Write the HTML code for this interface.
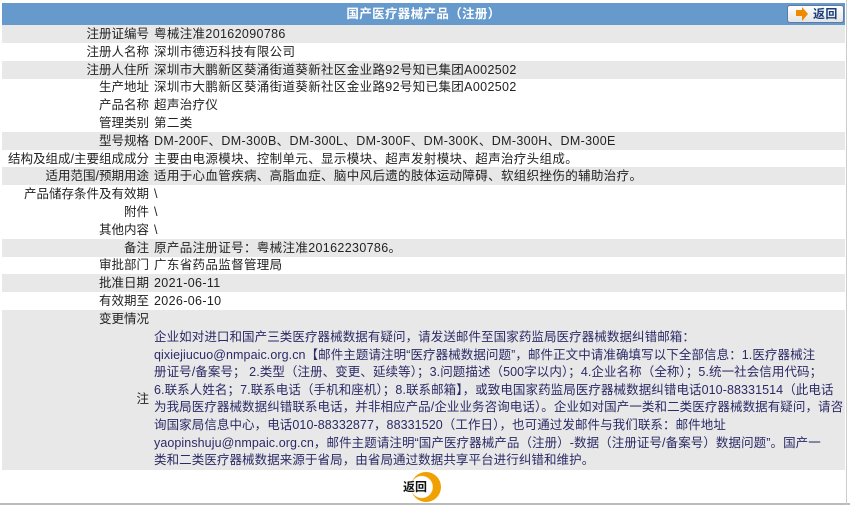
<!DOCTYPE html>
<html><head><meta charset="utf-8"><style>
body{margin:0;width:850px;height:505px;background:#fff;position:relative;overflow:hidden;font-family:"Liberation Sans","Noto Sans CJK SC",sans-serif;font-size:12.5px;color:#222;letter-spacing:0.35px}
.hd{position:absolute;left:2px;top:3px;width:843px;height:22px;background:#6699cc;color:#fff;font-weight:bold;text-align:center;line-height:22px;font-size:12.5px}
.btn{position:absolute;left:787px;top:5px;width:55px;height:16px;background:linear-gradient(#fff,#e4e4e4);border:1px solid #5a7aa8;border-radius:3px;font-size:12px;font-weight:bold;color:#1a3f7a;line-height:16px}
.btn i{position:absolute;left:8px;top:4px;width:6px;height:6px;background:#f08a00}
.btn b{position:absolute;left:14px;top:1px;width:0;height:0;border-left:6px solid #f08a00;border-top:7px solid transparent;border-bottom:7px solid transparent}
.btn span{position:absolute;left:25px;top:0}
.r{position:absolute;left:2px;width:843px;height:18px;line-height:18px;white-space:nowrap}
.g{background:#e8e8e8}
.l{position:absolute;right:696px;text-align:right;letter-spacing:0}
.v{position:absolute;left:152px}
.note{position:absolute;left:154px;top:329px;line-height:17.6px;color:#2a2a66;white-space:nowrap;letter-spacing:0.08px}
.back{position:absolute;left:403px;top:478px;font-weight:bold;font-size:12px;color:#111;letter-spacing:0}
.ring{position:absolute;left:411px;top:472px;width:30px;height:30px;border-radius:50%;background:radial-gradient(circle at 36% 50%,#fff 0 10.5px,#f0a000 11.5px)}
.bl{position:absolute;left:0;top:503px;width:850px;height:2px;background:#bbb}
.br{position:absolute;left:846px;top:0;width:1px;height:505px;background:#ccc}
</style></head><body>
<div class="hd">国产医疗器械产品（注册）</div>
<div class="btn"><i></i><b></b><span>返回</span></div>

<div class="r g" style="top:25px"><span class="l">注册证编号</span><span class="v">粤械注准20162090786</span></div>
<div class="r" style="top:42.8px"><span class="l">注册人名称</span><span class="v">深圳市德迈科技有限公司</span></div>
<div class="r g" style="top:60.6px"><span class="l">注册人住所</span><span class="v">深圳市大鹏新区葵涌街道葵新社区金业路92号知已集团A002502</span></div>
<div class="r" style="top:78.4px"><span class="l">生产地址</span><span class="v">深圳市大鹏新区葵涌街道葵新社区金业路92号知已集团A002502</span></div>
<div class="r" style="top:96.2px"><span class="l">产品名称</span><span class="v">超声治疗仪</span></div>
<div class="r" style="top:114px"><span class="l">管理类别</span><span class="v">第二类</span></div>
<div class="r g" style="top:131.8px"><span class="l">型号规格</span><span class="v">DM-200F、DM-300B、DM-300L、DM-300F、DM-300K、DM-300H、DM-300E</span></div>
<div class="r" style="top:149.6px"><span class="l">结构及组成/主要组成成分</span><span class="v">主要由电源模块、控制单元、显示模块、超声发射模块、超声治疗头组成。</span></div>
<div class="r g" style="top:167.4px"><span class="l">适用范围/预期用途</span><span class="v">适用于心血管疾病、高脂血症、脑中风后遗的肢体运动障碍、软组织挫伤的辅助治疗。</span></div>
<div class="r" style="top:185.2px"><span class="l">产品储存条件及有效期</span><span class="v">\</span></div>
<div class="r" style="top:203px"><span class="l">附件</span><span class="v">\</span></div>
<div class="r" style="top:220.8px"><span class="l">其他内容</span><span class="v">\</span></div>
<div class="r g" style="top:238.6px"><span class="l">备注</span><span class="v">原产品注册证号：粤械注准20162230786。</span></div>
<div class="r" style="top:256.4px"><span class="l">审批部门</span><span class="v">广东省药品监督管理局</span></div>
<div class="r g" style="top:274.2px"><span class="l">批准日期</span><span class="v">2021-06-11</span></div>
<div class="r" style="top:292px"><span class="l">有效期至</span><span class="v">2026-06-10</span></div>
<div class="r g" style="top:309.8px;height:160px"><span class="l">变更情况</span><span class="l" style="top:80px">注</span></div>
<div class="note">企业如对进口和国产三类医疗器械数据有疑问，请发送邮件至国家药监局医疗器械数据纠错邮箱：<br>qixiejiucuo@nmpaic.org.cn【邮件主题请注明“医疗器械数据问题”，邮件正文中请准确填写以下全部信息：1.医疗器械注<br>册证号/备案号； 2.类型（注册、变更、延续等）；3.问题描述（500字以内）；4.企业名称（全称）；5.统一社会信用代码；<br>6.联系人姓名；7.联系电话（手机和座机）；8.联系邮箱】，或致电国家药监局医疗器械数据纠错电话010-88331514（此电话<br>为我局医疗器械数据纠错联系电话，并非相应产品/企业业务咨询电话）。企业如对国产一类和二类医疗器械数据有疑问，请咨<br>询国家局信息中心，电话010-88332877，88331520（工作日），也可通过发邮件与我们联系：邮件地址<br>yaopinshuju@nmpaic.org.cn，邮件主题请注明“国产医疗器械产品（注册）-数据（注册证号/备案号）数据问题”。国产一<br>类和二类医疗器械数据来源于省局，由省局通过数据共享平台进行纠错和维护。</div>
<div class="ring"></div>
<div class="back">返回</div>
<div class="bl"></div><div class="br"></div>
</body></html>
